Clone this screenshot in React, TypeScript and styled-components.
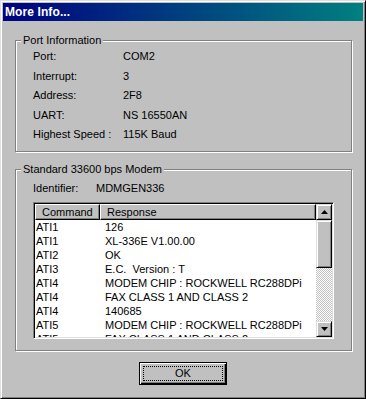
import React from "react";
import styled, { createGlobalStyle } from "styled-components";

const GlobalStyle = createGlobalStyle`
  html, body {
    margin: 0;
    padding: 0;
    background: #c0c0c0;
  }
  body {
    font-family: "Liberation Sans", Arial, sans-serif;
    font-size: 11px;
    color: #000;
  }
`;

const Window = styled.div`
  box-sizing: border-box;
  width: 366px;
  height: 399px;
  padding: 2px;
  background: #c0c0c0;
  border: 1px solid;
  border-color: #dfdfdf #000 #000 #dfdfdf;
  box-shadow: inset 1px 1px #fff, inset -1px -1px #808080;
  display: flex;
  flex-direction: column;
`;

const TitleBar = styled.div`
  height: 18px;
  flex: none;
  display: flex;
  align-items: center;
  padding-left: 2px;
  background: linear-gradient(to right, #000080, #008080);
  color: #fff;
  font-weight: bold;
  font-size: 12px;
  letter-spacing: 0.1px;
`;

const Body = styled.div`
  display: flex;
  flex-direction: column;
  padding: 19px 0 0 12px;
`;

const GroupBox = styled.div<{ $height: number; $gap: number }>`
  position: relative;
  box-sizing: border-box;
  width: 337px;
  height: ${(p) => p.$height}px;
  margin-top: ${(p) => p.$gap}px;
  border: 1px solid #808080;
  box-shadow: inset 1px 1px #fff, 1px 1px #fff;
  padding-left: 17px;
`;

const Legend = styled.span`
  position: absolute;
  top: -7px;
  left: 5px;
  padding: 0 2px;
  line-height: 13px;
  background: #c0c0c0;
`;

const InfoGrid = styled.div`
  display: grid;
  grid-template-columns: 90px auto;
  grid-auto-rows: 19.5px;
  align-items: center;
  padding-top: 6px;
  line-height: 13px;
`;

const IdentRow = styled.div`
  display: grid;
  grid-template-columns: 63px auto;
  line-height: 14px;
  margin-top: 11px;
`;

const ListView = styled.div`
  box-sizing: border-box;
  width: 301px;
  height: 137px;
  margin-top: 7px;
  padding: 1px;
  border: 1px solid;
  border-color: #808080 #fff #fff #808080;
  box-shadow: inset 1px 1px #000, inset -1px -1px #dfdfdf;
  display: flex;
`;

const ListMain = styled.div`
  flex: 1;
  display: flex;
  flex-direction: column;
  overflow: hidden;
  background: #fff;
`;

const HeaderRow = styled.div`
  display: grid;
  grid-template-columns: 65px 1fr;
  flex: none;
  background: #c0c0c0;
`;

const HeaderCell = styled.div`
  box-sizing: border-box;
  height: 16px;
  line-height: 14px;
  padding-left: 6px;
  border: 1px solid;
  border-color: #fff #000 #000 #fff;
  box-shadow: inset -1px -1px #808080;
`;

const Row = styled.div`
  display: grid;
  grid-template-columns: 65px 1fr;
  height: 14px;
  line-height: 14px;
  flex: none;
  white-space: pre;
`;

const CmdCell = styled.div`
  padding-left: 1px;
`;

const RespCell = styled.div`
  padding-left: 5px;
`;

const ScrollBar = styled.div`
  width: 16px;
  flex: none;
  display: flex;
  flex-direction: column;
`;

const RaisedBox = styled.div<{ $h?: number }>`
  box-sizing: border-box;
  height: ${(p) => (p.$h ? `${p.$h}px` : "16px")};
  flex: none;
  background: #c0c0c0;
  border: 1px solid;
  border-color: #dfdfdf #000 #000 #dfdfdf;
  box-shadow: inset 1px 1px #fff, inset -1px -1px #808080;
  display: flex;
  align-items: center;
  justify-content: center;
`;

const Track = styled.div`
  flex: 1;
  background-image: conic-gradient(#fff 25%, #c0c0c0 0 50%, #fff 0 75%, #c0c0c0 0);
  background-size: 2px 2px;
`;

const ButtonRow = styled.div`
  display: flex;
  justify-content: center;
  margin-top: 11px;
  padding-right: 12px;
`;

const OkButton = styled.button`
  box-sizing: border-box;
  width: 88px;
  height: 23px;
  padding: 3px;
  margin: 0;
  background: #c0c0c0;
  border: 1px solid #000;
  box-shadow: inset 1px 1px #fff, inset -1px -1px #000, inset -2px -2px #808080;
  font-family: "Liberation Sans", Arial, sans-serif;
  font-size: 11px;
  color: #000;
  display: flex;
`;

const FocusRing = styled.span`
  flex: 1;
  border: 1px dotted #000;
  display: flex;
  align-items: center;
  justify-content: center;
  line-height: 13px;
`;

const Arrow = ({ down }: { down?: boolean }) => (
  <svg width="7" height="4" viewBox="0 0 7 4" style={{ display: "block" }}>
    <polygon points={down ? "0,0 7,0 3.5,4" : "3.5,0 7,4 0,4"} fill="#000" />
  </svg>
);

const portInfo: [string, string][] = [
  ["Port:", "COM2"],
  ["Interrupt:", "3"],
  ["Address:", "2F8"],
  ["UART:", "NS 16550AN"],
  ["Highest Speed :", "115K Baud"],
];

// last row only half shows, the list is scrolled to the top
const responses: [string, string][] = [
  ["ATI1", "126"],
  ["ATI1", "XL-336E V1.00.00"],
  ["ATI2", "OK"],
  ["ATI3", "E.C.  Version : T"],
  ["ATI4", "MODEM CHIP : ROCKWELL RC288DPi"],
  ["ATI4", "FAX CLASS 1 AND CLASS 2"],
  ["ATI4", "140685"],
  ["ATI5", "MODEM CHIP : ROCKWELL RC288DPi"],
  ["ATI5", "FAX CLASS 1 AND CLASS 2"],
];

export default function App() {
  return (
    <>
      <GlobalStyle />
      <Window>
        <TitleBar>More Info...</TitleBar>
        <Body>
          <GroupBox $height={112} $gap={0}>
            <Legend>Port Information</Legend>
            <InfoGrid>
              {portInfo.map(([k, v]) => (
                <React.Fragment key={k}>
                  <span>{k}</span>
                  <span>{v}</span>
                </React.Fragment>
              ))}
            </InfoGrid>
          </GroupBox>
          <GroupBox $height={182} $gap={17}>
            <Legend>Standard 33600 bps Modem</Legend>
            <IdentRow>
              <span>Identifier:</span>
              <span>MDMGEN336</span>
            </IdentRow>
            <ListView>
              <ListMain>
                <HeaderRow>
                  <HeaderCell>Command</HeaderCell>
                  <HeaderCell>Response</HeaderCell>
                </HeaderRow>
                {responses.map(([cmd, resp], i) => (
                  <Row key={i}>
                    <CmdCell>{cmd}</CmdCell>
                    <RespCell>{resp}</RespCell>
                  </Row>
                ))}
              </ListMain>
              <ScrollBar>
                <RaisedBox>
                  <Arrow />
                </RaisedBox>
                <RaisedBox $h={48} />
                <Track />
                <RaisedBox>
                  <Arrow down />
                </RaisedBox>
              </ScrollBar>
            </ListView>
          </GroupBox>
          <ButtonRow>
            <OkButton>
              <FocusRing>OK</FocusRing>
            </OkButton>
          </ButtonRow>
        </Body>
      </Window>
    </>
  );
}
